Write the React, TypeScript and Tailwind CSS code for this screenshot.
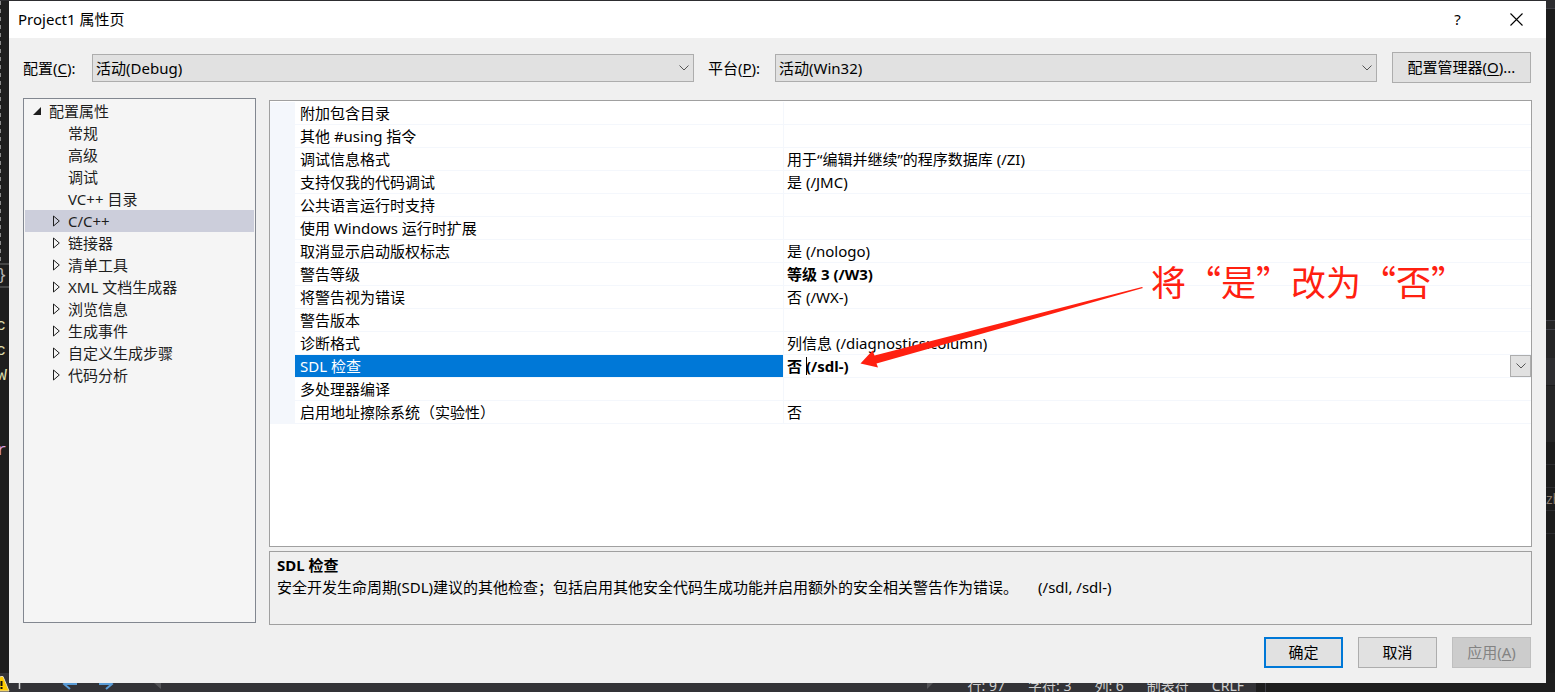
import { useState } from "react";
import clsx from "clsx";

interface TreeItem {
  label: string;
  expandable: boolean;
}

interface PropertyRow {
  name: string;
  value: string;
  bold?: boolean;
}

const treeItems: TreeItem[] = [
  { label: "常规", expandable: false },
  { label: "高级", expandable: false },
  { label: "调试", expandable: false },
  { label: "VC++ 目录", expandable: false },
  { label: "C/C++", expandable: true },
  { label: "链接器", expandable: true },
  { label: "清单工具", expandable: true },
  { label: "XML 文档生成器", expandable: true },
  { label: "浏览信息", expandable: true },
  { label: "生成事件", expandable: true },
  { label: "自定义生成步骤", expandable: true },
  { label: "代码分析", expandable: true },
];

const rows: PropertyRow[] = [
  { name: "附加包含目录", value: "" },
  { name: "其他 #using 指令", value: "" },
  { name: "调试信息格式", value: "用于“编辑并继续”的程序数据库 (/ZI)" },
  { name: "支持仅我的代码调试", value: "是 (/JMC)" },
  { name: "公共语言运行时支持", value: "" },
  { name: "使用 Windows 运行时扩展", value: "" },
  { name: "取消显示启动版权标志", value: "是 (/nologo)" },
  { name: "警告等级", value: "等级 3 (/W3)", bold: true },
  { name: "将警告视为错误", value: "否 (/WX-)" },
  { name: "警告版本", value: "" },
  { name: "诊断格式", value: "列信息 (/diagnostics:column)" },
  { name: "SDL 检查", value: "否 (/sdl-)", bold: true },
  { name: "多处理器编译", value: "" },
  { name: "启用地址擦除系统（实验性）", value: "否" },
];

function Chevron() {
  return (
    <svg width="10" height="6" viewBox="0 0 10 6" fill="none" stroke="#555" aria-hidden="true">
      <path d="M0.5 0.5 5 5 9.5 0.5" />
    </svg>
  );
}

function Combo({ id, value }: { id: string; value: string }) {
  return (
    <div className="relative flex-1 min-w-0">
      <select
        id={id}
        className="block w-full h-7 appearance-none border border-[#adadad] bg-[#e1e1e1] pl-[3px] pr-6 text-black"
      >
        <option>{value}</option>
      </select>
      <span className="pointer-events-none absolute right-[5px] top-[11px]">
        <Chevron />
      </span>
    </div>
  );
}

// Code window and status bar that show around the dialog's edges
function Editor() {
  return (
    <div className="absolute inset-0 flex flex-col overflow-hidden bg-[#1e1e1e]" aria-hidden="true">
      <div className="h-px shrink-0 bg-[#2d2d30]" />
      <div className="flex min-h-0 flex-1 justify-between">
        <div className="w-[9px] font-['Liberation_Mono',monospace] text-[17px] leading-[25px] text-[#dcdcaa]">
          <div className="h-[262px] w-px bg-[repeating-linear-gradient(180deg,#8a8a8a_0_4px,#1e1e1e_4px_8px)]" />
          <div className="flex h-[25px] items-center justify-end border-y-2 border-[#464646] pr-[2px] text-[#b4b4b4]">{"}"}</div>
          <div className="mt-[25px] flex justify-end pr-[3px]">c</div>
          <div className="flex justify-end pr-[3px]">c</div>
          <div className="flex justify-end pr-[2px]">W</div>
          <div className="mt-[50px] flex justify-end pr-[2px] text-[#d8a0df]">r</div>
        </div>
        <div className="w-[9px] bg-[#1c1c1c] text-sm text-[#8c7b6b]">
          <div className="h-[8px] border-b border-[#3f3f46] bg-[#2d2d30]" />
          <div className="h-[311px]" />
          <div className="h-[10px] border-y border-[#3f3f46] bg-[#252526]" />
          <div className="h-[28px] bg-[#252526]" />
          <div className="h-[28px] border-b border-[#1b1b1c] bg-[#2d2d30]" />
          <div className="h-[56px] bg-[#252526]" />
          <div className="h-[23px] border-b border-[#2d2d30]" />
          <div className="h-[23px] border-b border-[#2d2d30]" />
          <div className="flex h-[23px] items-center border-b border-[#2d2d30]">zh</div>
          <div className="h-[23px] border-b border-[#2d2d30]" />
        </div>
      </div>
      <div className="flex h-[19px] shrink-0 gap-[9px]">
        <div className="flex w-[1256px] justify-between bg-[#333337] pr-3 text-sm leading-[22px] text-[#d0d0d0]">
          <svg width="162" height="19" viewBox="0 0 162 19" fill="none">
            <path d="M-8 18 0.500 3.500H3L9 18Z" fill="#ffcc00" stroke="#e8dcb0" />
            <path d="M1.500 8v5M1.500 14v2" stroke="#111" strokeWidth="2" />
            <path d="M19.500 8v8" stroke="#d8d8d8" strokeWidth="1.500" />
            <path d="M77 11H64M70 16l-6-5 6-5M99 11h13M106 6l6 5-6 5" stroke="#5a9bd5" strokeWidth="2" />
            <path d="M154 10h7v6Z" fill="#555558" />
          </svg>
          <div className="flex gap-[23px] pt-[2px]">
            <svg width="18" height="16" viewBox="0 0 18 16"><path d="M0 8h6L0 14Z" fill="#555558" /></svg>
            <span>行: 97</span>
            <span>字符: 3</span>
            <span>列: 6</span>
            <span>制表符</span>
            <span>CRLF</span>
          </div>
        </div>
        <div className="w-px bg-[#3f3f46]" />
      </div>
    </div>
  );
}

export default function App() {
  const [sdl, setSdl] = useState("否 (/sdl-)");

  return (
    <div className="relative h-screen min-h-[600px] overflow-hidden font-['Noto_Sans','Noto_Sans_CJK_SC',sans-serif] text-[15px] leading-[22px] text-black">
      <Editor />

      <div role="dialog" aria-label="Project1 属性页" className="absolute top-px right-[9px] bottom-[9px] left-[9px] flex flex-col bg-[#f0f0f0]">
        {/* Title bar */}
        <div className="flex h-[37px] shrink-0 items-center bg-white pl-[9px]">
          <h1 className="flex-1 pb-[2px]">Project1 属性页</h1>
          <button className="flex h-full w-[57px] items-center justify-center pb-[2px]" aria-label="帮助">?</button>
          <button className="flex h-full w-[60px] items-center justify-center" aria-label="关闭">
            <svg width="13" height="13" viewBox="0 0 13 13" stroke="#000" strokeWidth="1.1">
              <path d="M0.5 0.5l12 12M12.500 0.500l-12 12" />
            </svg>
          </button>
        </div>

        <div className="flex min-h-0 flex-1 flex-col px-[14px] pt-[14px] pb-[15px]">
          {/* Configuration and platform */}
          <div className="flex h-[31px] items-center pr-px">
            <label htmlFor="config" className="w-[69px]">配置(<u className="underline-offset-2">C</u>):</label>
            <Combo id="config" value="活动(Debug)" />
            <label htmlFor="platform" className="ml-[14px] w-[67px]">平台(<u className="underline-offset-2">P</u>):</label>
            <Combo id="platform" value="活动(Win32)" />
            <button className="ml-[15px] h-[31px] w-[139px] border border-[#adadad] bg-[#e1e1e1] pb-[2px]">
              配置管理器(<u className="underline-offset-2">O</u>)...
            </button>
          </div>

          <div className="mt-[15px] flex min-h-0 flex-1 gap-[13px]">
            {/* Tree */}
            <ul className="mb-[2px] w-[233px] shrink-0 border border-[#828790] bg-[#f5f5f5] p-px text-[#1e1e1e]">
              <li>
                <div className="flex h-[22px] items-center gap-2 pl-2">
                  <svg width="8" height="8" viewBox="0 0 8 8"><path d="M8 0v8H0Z" fill="#1e1e1e" /></svg>
                  配置属性
                </div>
                <ul>
                  {treeItems.map((item) => (
                    <li
                      key={item.label}
                      className={clsx("flex h-[22px] items-center gap-2 pl-[27px]", item.label === "C/C++" && "bg-[#cccedb]")}
                    >
                      <svg width="8" height="12" viewBox="0 0 8 12" fill="none" stroke="#1e1e1e">
                        {item.expandable && <path d="M1.500 1v10L7.300 6Z" />}
                      </svg>
                      {item.label}
                    </li>
                  ))}
                </ul>
              </li>
            </ul>

            <div className="mt-[2px] flex min-w-0 flex-1 flex-col gap-1">
              {/* Property grid */}
              <div className="relative min-h-0 flex-1 border border-[#a0a0a0] bg-white pt-px">
                <table className="w-full table-fixed border-separate border-spacing-0">
                  <colgroup>
                    <col className="w-[25px]" />
                    <col className="w-[489px]" />
                    <col />
                  </colgroup>
                  <tbody>
                    {rows.map((row) => {
                      const selected = row.name === "SDL 检查";
                      return (
                        <tr key={row.name} className="h-[23px]">
                          <td className="bg-[#f4f7fc] p-0" />
                          <th
                            scope="row"
                            className={clsx(
                              "border-r border-b border-[#f4f7fc] p-0 pl-[5px] text-left font-normal",
                              selected && "bg-[#0078d7] bg-clip-padding text-white"
                            )}
                          >
                            {row.name}
                          </th>
                          <td className={clsx("border-b border-[#f4f7fc] p-0 pl-[3px]", row.bold && "font-bold")}>
                            {selected ? (
                              <div className="relative flex h-[22px]">
                                <input
                                  aria-label={row.name}
                                  value={sdl}
                                  onChange={(e) => setSdl(e.target.value)}
                                  className="h-[22px] min-w-0 flex-1 font-bold outline-none"
                                />
                                <span className="absolute top-[2px] left-[19px] h-[18px] w-px bg-black" />
                                <button aria-label="展开" className="flex w-[21px] items-center justify-center border border-[#adadad] bg-[#e1e1e1]">
                                  <Chevron />
                                </button>
                              </div>
                            ) : (
                              row.value
                            )}
                          </td>
                        </tr>
                      );
                    })}
                  </tbody>
                </table>

                {/* Red note with its arrow */}
                <svg className="pointer-events-none absolute top-[185px] left-[590px]" width="284" height="84" viewBox="0 0 284 84">
                  <path d="M0.500 77.500 12.500 64.500 14.500 69.500 282 1 283 2 16.500 77.500 18 81.500Z" fill="#ff2010" />
                </svg>
                <p className="pointer-events-none absolute top-[160px] left-[881px] font-['Noto_Sans_CJK_SC',sans-serif] text-[35px] leading-[40px] whitespace-nowrap text-[#ff2010]">
                  将“是”改为“否”
                </p>
              </div>

              {/* Description */}
              <div className="h-[74px] shrink-0 border border-[#a0a0a0] px-[7px] pt-[2px]">
                <h2 className="font-bold">SDL 检查</h2>
                <p>
                  安全开发生命周期(SDL)建议的其他检查；包括启用其他安全代码生成功能并启用额外的安全相关警告作为错误。
                  <span className="ml-5">(/sdl, /sdl-)</span>
                </p>
              </div>
            </div>
          </div>

          {/* Buttons */}
          <div className="mt-3 flex justify-end gap-[15px] pr-px">
            <button className="h-[31px] w-[79px] border-2 border-[#0078d7] bg-[#e1e1e1] pb-[2px]">确定</button>
            <button className="h-[31px] w-[79px] border border-[#adadad] bg-[#e1e1e1] pb-[2px]">取消</button>
            <button disabled className="h-[31px] w-[79px] border border-[#bfbfbf] bg-[#cccccc] pb-[2px] text-[#838383]">
              应用(<u className="underline-offset-2">A</u>)
            </button>
          </div>
        </div>
      </div>
    </div>
  );
}
